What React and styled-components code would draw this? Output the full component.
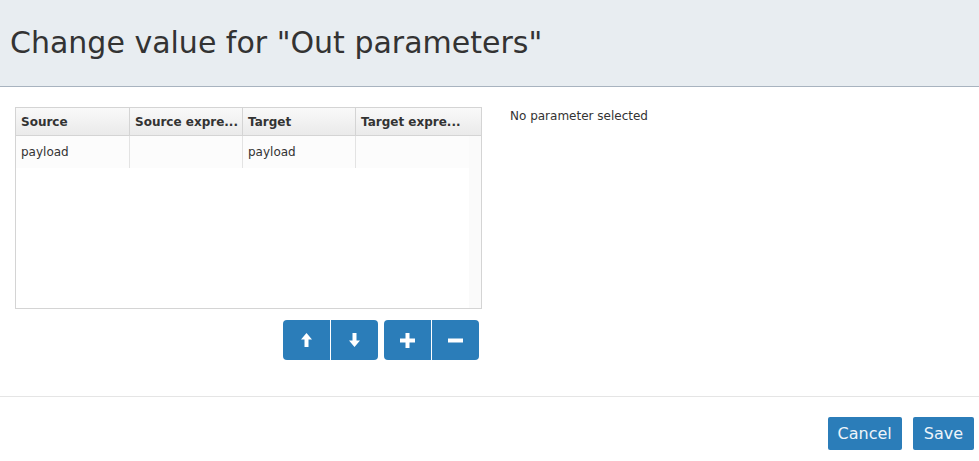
import styled, { createGlobalStyle } from 'styled-components';

const GlobalStyle = createGlobalStyle`
  body {
    margin: 0;
    background: #ffffff;
    font-family: "DejaVu Sans", "Liberation Sans", sans-serif;
    color: #333333;
  }
`;

const Modal = styled.div`
  width: 979px;
  height: 461px;
  display: flex;
  flex-direction: column;
  background: #ffffff;
`;

const Header = styled.div`
  height: 87px;
  box-sizing: border-box;
  background-color: #e8edf1;
  border-bottom: 1px solid #a8b3bf;
  display: flex;
  align-items: center;
  padding: 0 0 2px 10px;
`;

const Title = styled.h2`
  margin: 0;
  font-size: 30px;
  font-weight: normal;
  color: #333333;
`;

const Body = styled.div`
  height: 310px;
  box-sizing: border-box;
  padding: 20px 15px 0 15px;
  border-bottom: 1px solid #e5e5e5;
  display: flex;
  gap: 28px;
`;

const LeftColumn = styled.div`
  width: 467px;
  display: flex;
  flex-direction: column;
`;

const Grid = styled.div`
  width: 467px;
  height: 202px;
  box-sizing: border-box;
  border: 1px solid #d4d4d4;
  display: flex;
  flex-direction: column;
`;

const HeaderRow = styled.div`
  display: flex;
  height: 27px;
  border-bottom: 1px solid #d4d4d4;
  background: linear-gradient(#f9f9f9, #eaeaea);
`;

const HeaderCell = styled.div`
  width: ${(p) => p.width}px;
  box-sizing: border-box;
  padding: 0 5px;
  border-right: ${(p) => (p.last ? 'none' : '1px solid #d4d4d4')};
  font-size: 12px;
  font-weight: bold;
  color: #333333;
  display: flex;
  align-items: center;
  white-space: nowrap;
  overflow: hidden;
`;

const GridBody = styled.div`
  flex: 1;
  display: flex;
`;

const Rows = styled.div`
  flex: 1;
`;

const Row = styled.div`
  display: flex;
  height: 32px;
  background: #fcfcfc;
`;

const Cell = styled.div`
  width: ${(p) => p.width}px;
  box-sizing: border-box;
  padding: 0 5px;
  border-right: ${(p) => (p.last ? 'none' : '1px solid #e3e3e3')};
  font-size: 12px;
  color: #333333;
  display: flex;
  align-items: center;
`;

const ScrollTrack = styled.div`
  width: 12px;
  background: #fafafa;
`;

const Toolbar = styled.div`
  display: flex;
  justify-content: flex-end;
  gap: 6px;
  margin-top: 11px;
  padding-right: 3px;
`;

const ButtonGroup = styled.div`
  display: flex;
  gap: 1px;
`;

const IconButton = styled.button`
  width: 47px;
  height: 40px;
  border: none;
  padding: 0;
  background-color: #2b7db9;
  color: #ffffff;
  display: flex;
  align-items: center;
  justify-content: center;
  border-radius: ${(p) => (p.first ? '4px 0 0 4px' : '0 4px 4px 0')};
`;

const Details = styled.div`
  font-size: 12px;
  color: #333333;
  padding-top: 2px;
`;

const Footer = styled.div`
  flex: 1;
  display: flex;
  justify-content: flex-end;
  align-items: flex-start;
  gap: 11px;
  padding: 20px 5px 0 0;
`;

const FooterButton = styled.button`
  height: 33px;
  padding: 0 ${(p) => p.pad}px;
  border: none;
  border-radius: 2px;
  background-color: #2b7db9;
  color: #eef4fa;
  font-family: "DejaVu Sans", "Liberation Sans", sans-serif;
  font-size: 16px;
`;

const ArrowUp = () => (
  <svg width="11" height="14" viewBox="0 0 11 14">
    <path d="M5.5 0 L11 6.5 H7.5 V14 H3.5 V6.5 H0 Z" fill="#ffffff" />
  </svg>
);

const ArrowDown = () => (
  <svg width="11" height="14" viewBox="0 0 11 14">
    <path d="M5.5 14 L11 7.5 H7.5 V0 H3.5 V7.5 H0 Z" fill="#ffffff" />
  </svg>
);

const Plus = () => (
  <svg width="15" height="15" viewBox="0 0 15 15">
    <path d="M5.5 0 H9.5 V5.5 H15 V9.5 H9.5 V15 H5.5 V9.5 H0 V5.5 H5.5 Z" fill="#ffffff" />
  </svg>
);

const Minus = () => (
  <svg width="15" height="15" viewBox="0 0 15 15">
    <rect x="0" y="5.5" width="15" height="4" fill="#ffffff" />
  </svg>
);

const columns = [
  { title: 'Source', width: 114 },
  { title: 'Source expre...', width: 113 },
  { title: 'Target', width: 113 },
  { title: 'Target expre...', width: 125, last: true },
];

const rows = [['payload', '', 'payload', '']];
const rowWidths = [114, 113, 113, 113];

const App = () => {
  return (
    <Modal>
      <GlobalStyle />
      <Header>
        <Title>Change value for "Out parameters"</Title>
      </Header>
      <Body>
        <LeftColumn>
          <Grid>
            <HeaderRow>
              {columns.map((c) => (
                <HeaderCell key={c.title} width={c.width} last={c.last}>
                  {c.title}
                </HeaderCell>
              ))}
            </HeaderRow>
            <GridBody>
              <Rows>
                {rows.map((r, i) => (
                  <Row key={i}>
                    {r.map((v, j) => (
                      <Cell key={j} width={rowWidths[j]} last={j === r.length - 1}>
                        {v}
                      </Cell>
                    ))}
                  </Row>
                ))}
              </Rows>
              <ScrollTrack />
            </GridBody>
          </Grid>
          <Toolbar>
            <ButtonGroup>
              <IconButton first>
                <ArrowUp />
              </IconButton>
              <IconButton>
                <ArrowDown />
              </IconButton>
            </ButtonGroup>
            <ButtonGroup>
              <IconButton first>
                <Plus />
              </IconButton>
              <IconButton>
                <Minus />
              </IconButton>
            </ButtonGroup>
          </Toolbar>
        </LeftColumn>
        <Details>No parameter selected</Details>
      </Body>
      <Footer>
        <FooterButton pad={10}>Cancel</FooterButton>
        <FooterButton pad={11}>Save</FooterButton>
      </Footer>
    </Modal>
  );
};

export default App;
